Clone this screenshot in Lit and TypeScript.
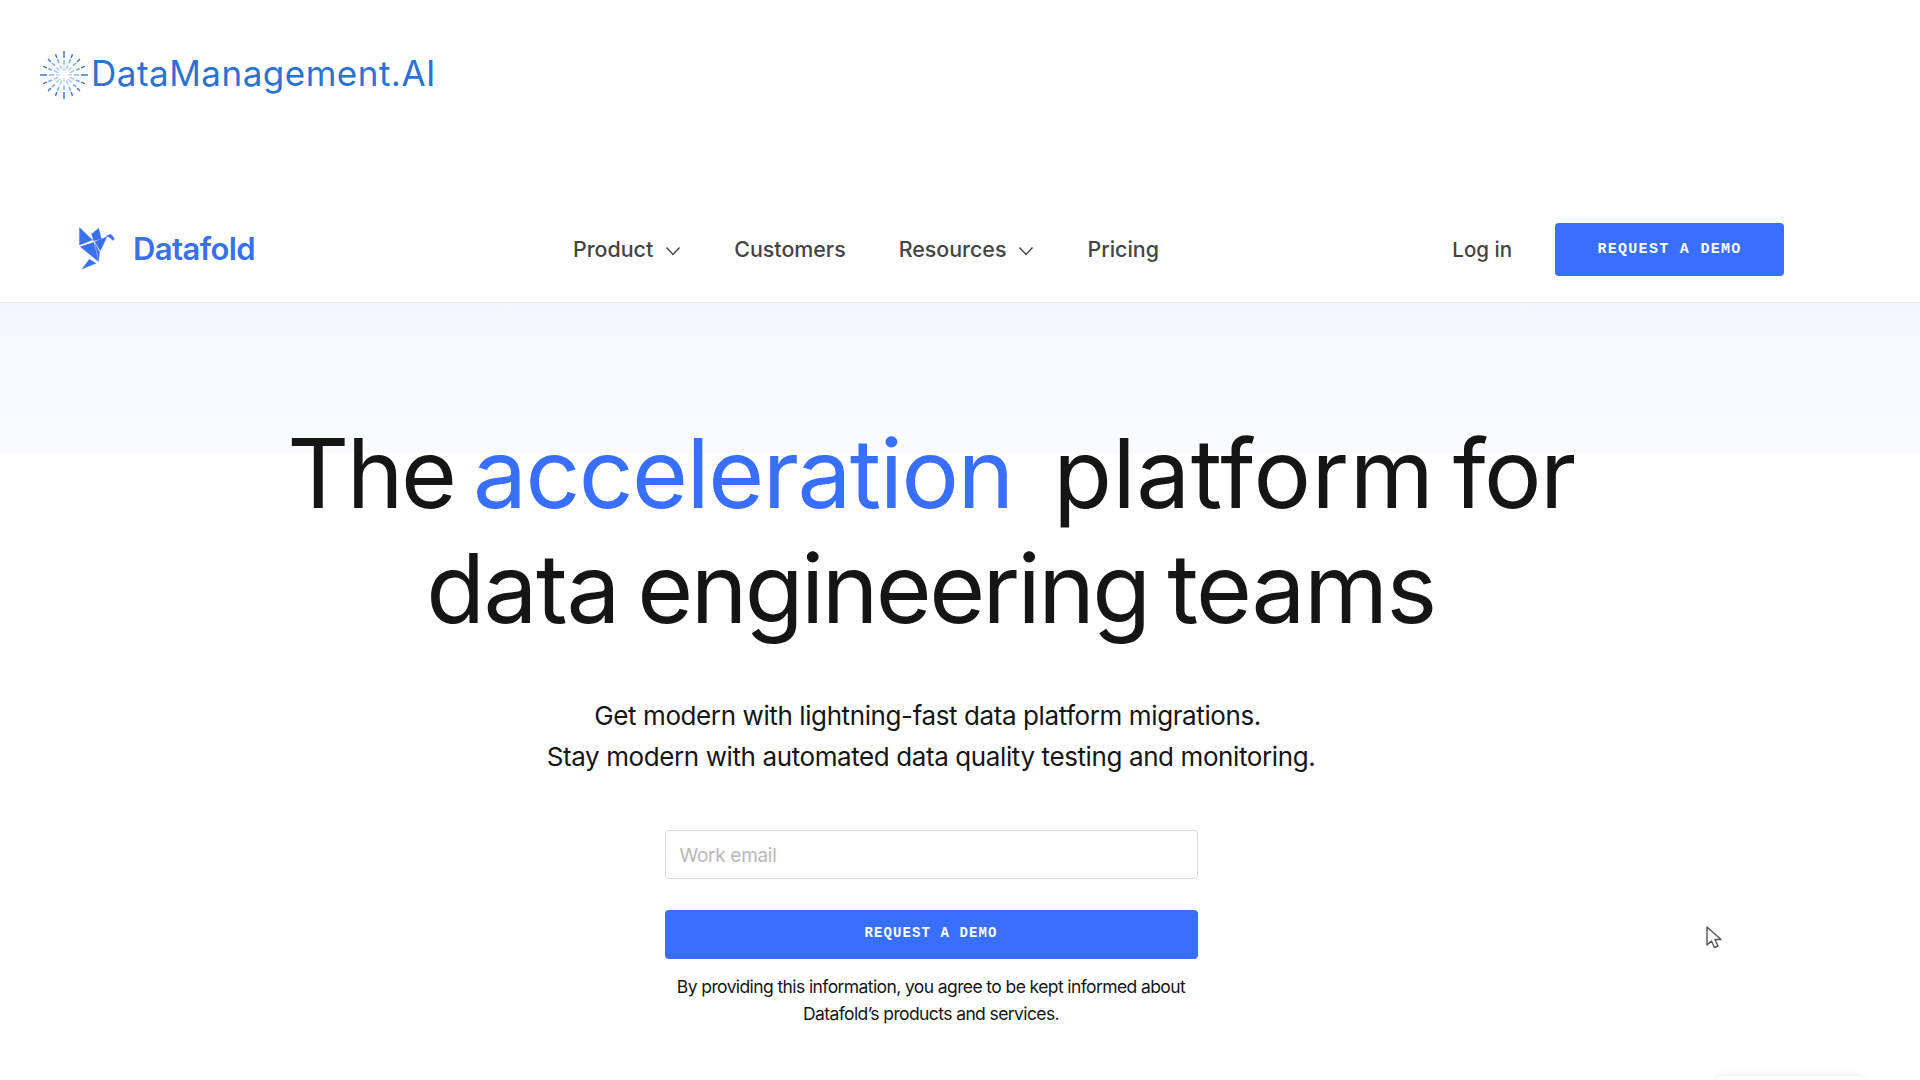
import { LitElement, html, css, svg } from 'lit';
import { customElement } from 'lit/decorators.js';

const rays = Array.from({ length: 16 }, (_, i) => (i * Math.PI) / 8);

@customElement('app-root')
export class AppRoot extends LitElement {
  static styles = css`
    :host {
      display: block;
      position: relative;
      width: 1920px;
      height: 1080px;
      overflow: hidden;
      background: #fff;
      font-family: Inter, 'Liberation Sans', sans-serif;
      color: #151515;
    }

    .brand {
      display: flex;
      align-items: center;
      gap: 3px;
      height: 175px;
      padding: 0 0 29px 40px;
      box-sizing: border-box;
    }
    .brand svg {
      width: 48px;
      height: 48px;
      margin-top: 3px;
    }
    .brand span {
      font-size: 35px;
      letter-spacing: 0.5px;
      color: #2a72d4;
    }

    nav {
      display: flex;
      align-items: center;
      height: 128px;
      box-sizing: border-box;
      padding: 22px 136px 0 78px;
      border-bottom: 1px solid #e3e6ee;
    }
    .logo {
      display: flex;
      align-items: center;
      gap: 17px;
      width: 495px;
      margin-bottom: 2px;
      font-size: 31px;
      font-weight: 600;
      letter-spacing: -0.6px;
      color: #3a6ff0;
    }
    .logo svg {
      width: 37px;
      height: 44px;
      margin-left: 1px;
    }
    .links {
      display: flex;
      align-items: center;
      gap: 53px;
      margin-bottom: 2px;
      font-size: 21.4px;
      font-weight: 500;
      color: #444;
    }
    .link {
      display: flex;
      align-items: center;
      gap: 12px;
    }
    .link svg {
      width: 16px;
      height: 10px;
      margin-top: 4px;
    }
    .actions {
      display: flex;
      align-items: center;
      gap: 43px;
      margin-left: auto;
      font-size: 20.5px;
      font-weight: 500;
      color: #444;
    }
    .btn {
      display: flex;
      align-items: center;
      justify-content: center;
      border: 0;
      border-radius: 4px;
      background: #386ffe;
      color: #fff;
      font-family: 'Liberation Mono', monospace;
      font-weight: 700;
    }
    .actions .btn {
      width: 229px;
      height: 53px;
      padding-bottom: 2px;
      font-size: 15px;
      letter-spacing: 1.3px;
    }

    .hero {
      display: flex;
      flex-direction: column;
      align-items: center;
      width: 1920px;
      padding-right: 58px;
      box-sizing: border-box;
      background: linear-gradient(#f3f6fe, #fafbff 150px, #fff 150px);
    }
    h1 {
      margin: 113px 0 0;
      font-size: 96px;
      font-weight: 400;
      line-height: 115px;
      letter-spacing: -1.5px;
      word-spacing: -7px;
      text-align: center;
      white-space: nowrap;
    }
    h1 em {
      font-style: normal;
      color: #386ffe;
      margin-right: 22px;
    }
    h1 .the {
      letter-spacing: -2.5px;
    }
    h1 .wide {
      letter-spacing: 0.5px;
    }
    h1 .tight {
      letter-spacing: -2.6px;
    }
    .lead {
      margin: 50px 0 0;
      font-size: 26px;
      line-height: 40.5px;
      letter-spacing: -0.4px;
      text-align: center;
    }
    form {
      display: flex;
      flex-direction: column;
      width: 533px;
      margin-top: 53px;
    }
    input {
      height: 49px;
      box-sizing: border-box;
      padding: 2px 14px 0;
      border: 1px solid #dadada;
      border-radius: 4px;
      font: 400 19px Inter, sans-serif;
      letter-spacing: -0.3px;
    }
    input::placeholder {
      color: #b8b8b8;
      opacity: 1;
    }
    form .btn {
      height: 49px;
      margin-top: 31px;
      padding-bottom: 5px;
      font-size: 14px;
      letter-spacing: 1.1px;
    }
    .note {
      margin: 14px 0 0;
      font-size: 17.5px;
      line-height: 27px;
      letter-spacing: -0.6px;
      text-align: center;
    }

    .cursor {
      position: absolute;
      left: 1704px;
      top: 925px;
      width: 20px;
      height: 26px;
    }
    .widget-edge {
      position: absolute;
      left: 1716px;
      top: 1076px;
      width: 146px;
      height: 10px;
      border-radius: 6px;
      box-shadow: 0 0 8px rgba(0, 0, 0, 0.1);
    }
  `;

  private burst() {
    return html`<svg viewBox="0 0 48 48" aria-hidden="true">
      ${rays.map((a, i) => {
        const c = Math.cos(a);
        const s = Math.sin(a);
        const long = i % 4 === 0;
        const seg = (r1: number, r2: number, color: string) =>
          svg`<line x1=${24 + c * r1} y1=${24 + s * r1} x2=${24 + c * r2} y2=${24 + s * r2}
            stroke=${color} stroke-width="1.500"></line>`;
        return long
          ? svg`${seg(4, 8, '#c4daf2')}${seg(10, 15, '#8fb5e2')}${seg(17, 24, '#3f78c8')}`
          : svg`${seg(6, 11, '#b4cfee')}${seg(13, 17, '#7ba6da')}${seg(18.5, 22.5, '#3f78c8')}`;
      })}
    </svg>`;
  }

  private chevron() {
    return html`<svg viewBox="0 0 16 10" aria-hidden="true">
      <path d="M1.5 1.5 8 8.5l6.5-7" fill="none" stroke="#444" stroke-width="1.4"></path>
    </svg>`;
  }

  render() {
    return html`
      <div class="brand">${this.burst()}<span>DataManagement.AI</span></div>
      <nav>
        <div class="logo">
          <svg viewBox="7 7 37 44" aria-hidden="true">
            <g fill="#3a6ff0" stroke="#3a6ff0" stroke-width="0.4" stroke-linejoin="round">
              <path d="M7.500 7.500 20.500 20 7.500 25z"></path>
              <path d="M19.500 14 26.700 8.300 29.300 19 21.700 20.700z"></path>
              <path d="M22.700 21.700 35 16.700 28.300 30.700z"></path>
              <path d="M34.500 16l4-2 4 4.500-1.500 2-2.500-2.500z"></path>
              <path d="M8.300 26.700 21.700 22.300 26.700 41.700z"></path>
              <path d="M23 24 27.500 32 26.800 40z"></path>
              <path d="M10 49 17.300 39.300 24 43.300z"></path>
            </g>
          </svg>
          Datafold
        </div>
        <div class="links">
          <span class="link">Product ${this.chevron()}</span>
          <span class="link">Customers</span>
          <span class="link">Resources ${this.chevron()}</span>
          <span class="link">Pricing</span>
        </div>
        <div class="actions">
          <span>Log in</span>
          <button class="btn">REQUEST A DEMO</button>
        </div>
      </nav>
      <main class="hero">
        <h1>
          <span class="the">The</span> <em>acceleration</em> <span class="wide">platform</span> for<br />data
          <span class="tight">engineering</span> teams
        </h1>
        <p class="lead">
          Get modern with lightning-fast data platform migrations.&nbsp;<br />
          Stay modern with automated data quality testing and monitoring.
        </p>
        <form>
          <input type="email" placeholder="Work email" />
          <button class="btn" type="button">REQUEST A DEMO</button>
          <p class="note">
            By providing this information, you agree to be kept informed about<br />
            Datafold’s products and services.
          </p>
        </form>
      </main>
      <svg class="cursor" viewBox="0 0 20 26" aria-hidden="true">
        <path
          d="M3 2v18l4.500-4 3 6.500 3.500-1.500-3-6.500h6z"
          fill="#fff"
          stroke="#555"
          stroke-width="1.400"
          stroke-linejoin="round"
        ></path>
      </svg>
      <div class="widget-edge"></div>
    `;
  }
}

declare global {
  interface HTMLElementTagNameMap {
    'app-root': AppRoot;
  }
}
